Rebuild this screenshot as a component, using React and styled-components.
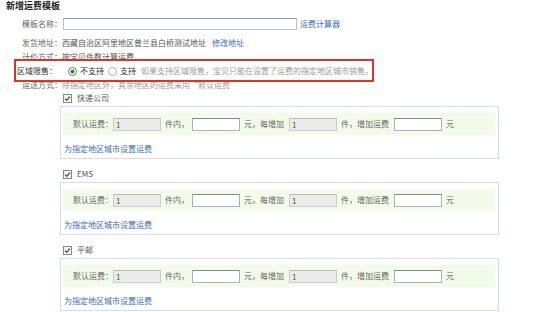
import React from "react";
import styled, { createGlobalStyle } from "styled-components";

const Global = createGlobalStyle`
  html, body { margin: 0; padding: 0; background: #fff; }
  body { font-family: "Noto Sans CJK SC", "Noto Sans", sans-serif; font-size: 8px; color: #444; }
  * { box-sizing: border-box; }
`;

const Page = styled.div`
  position: relative;
  width: 535px;
  height: 312px;
  overflow: hidden;
  padding-left: 6px;
`;

const Title = styled.div`
  height: 12px;
  line-height: 12px;
  font-size: 9px;
  font-weight: 700;
  color: #222;
`;

const Row = styled.div`
  display: flex;
  align-items: center;
  height: ${(p) => p.$h || 14}px;
  padding-left: ${(p) => (p.$shift ? 11 : 16)}px;
  white-space: nowrap;
  line-height: 12px;
`;

const Label = styled.span`
  color: ${(p) => (p.$strong ? "#333" : "#666")};
  width: ${(p) => (p.$w ? `${p.$w}px` : "auto")};
  flex: none;
`;

const Value = styled.span`
  color: ${(p) => (p.$muted ? "#9a9a9a" : "#555")};
  margin-left: ${(p) => p.$ml || 0}px;
`;

const Link = styled.a`
  color: #3b6dbb;
  text-decoration: none;
  margin-left: ${(p) => p.$ml || 0}px;
  cursor: pointer;
`;

const NameInput = styled.input`
  width: 234px;
  height: 12px;
  border: 1px solid #b9c3cc;
  border-top-color: #8f9aa6;
  padding: 0;
  margin-left: 2px;
  background: #fff;
`;

const RadioWrap = styled.span`
  display: inline-flex;
  align-items: center;
  margin-left: ${(p) => p.$ml || 0}px;
  color: #333;
  gap: 3px;
`;

const Radio = ({ checked }) => (
  <svg width="9" height="9" viewBox="0 0 9 9">
    <circle cx="4.5" cy="4.5" r="4" fill="#fff" stroke={checked ? "#4a7a4a" : "#9aa5b0"} strokeWidth="0.9" />
    {checked && <circle cx="4.5" cy="4.5" r="2" fill="#2f7d32" />}
  </svg>
);

const Section = styled.div`
  margin-left: 54px;
  width: 439px;
  margin-top: ${(p) => p.$mt || 0}px;
`;

const CheckRow = styled.div`
  display: flex;
  align-items: center;
  height: 12px;
  padding-left: 3px;
  gap: 5px;
  color: #555;
  line-height: 12px;
`;

const Check = () => (
  <svg width="9" height="9" viewBox="0 0 9 9">
    <rect x="0.5" y="0.5" width="8" height="8" fill="#f4f7f4" stroke="#7d8f7d" />
    <path d="M2 4.6 L3.8 6.3 L7 2.6" fill="none" stroke="#2c6a2c" strokeWidth="1.3" />
  </svg>
);

const Box = styled.div`
  margin-top: 2px;
  height: 53px;
  border: 1px solid #cfdfea;
  padding: 6px 3px 0 1px;
`;

const Band = styled.div`
  display: flex;
  align-items: center;
  height: 22px;
  background: #f3fbea;
  padding-left: 11px;
  white-space: nowrap;
  line-height: 12px;
`;

const FeeInput = styled.input`
  width: 48px;
  height: 13px;
  padding: 0 0 0 2px;
  font-family: "Noto Sans CJK SC", sans-serif;
  font-size: 8px;
  color: #555;
  border: 1px solid ${(p) => (p.$disabled ? "#cccccc" : "#a8b3be")};
  border-top-color: ${(p) => (p.$disabled ? "#bdbdbd" : "#7f8b97")};
  background: ${(p) => (p.$disabled ? "#ebebeb" : "#fff")};
  flex: none;
`;

const Unit = styled.span`
  color: #666;
  width: ${(p) => p.$w}px;
  padding-left: 4px;
  flex: none;
`;

const BoxLink = styled.div`
  padding-left: 2px;
  height: 26px;
  display: flex;
  align-items: center;
`;

const RedMark = styled.div`
  position: absolute;
  left: 14px;
  top: 59px;
  width: 360px;
  height: 23px;
  border: 2px solid #d8352f;
  pointer-events: none;
`;

const services = ["快递公司", "EMS", "平邮"];

const FeeBlock = ({ name, mt }) => (
  <Section $mt={mt}>
    <CheckRow>
      <Check />
      <span>{name}</span>
    </CheckRow>
    <Box>
      <Band>
        <Label $w={40}>默认运费：</Label>
        <FeeInput $disabled defaultValue="1" readOnly />
        <Unit $w={31}>件内，</Unit>
        <FeeInput />
        <Unit $w={49}>元，每增加</Unit>
        <FeeInput $disabled defaultValue="1" readOnly />
        <Unit $w={57}>件，增加运费</Unit>
        <FeeInput />
        <Unit $w={12}>元</Unit>
      </Band>
      <BoxLink>
        <Link>为指定地区城市设置运费</Link>
      </BoxLink>
    </Box>
  </Section>
);

export default function App() {
  return (
    <>
      <Global />
      <Page>
        <Title>新增运费模板</Title>
        <Row $h={23}>
          <Label $w={39}>模板名称：</Label>
          <NameInput />
          <Link $ml={3}>运费计算器</Link>
        </Row>
        <Row $h={15}>
          <Label>发货地址：</Label>
          <Value>西藏自治区阿里地区普兰县白桥测试地址</Value>
          <Link $ml={6}>修改地址</Link>
        </Row>
        <Row>
          <Label>计价方式：</Label>
          <Value>按宝贝件数计算运费</Value>
        </Row>
        <Row $shift>
          <Label $strong $w={51}>区域限售：</Label>
          <RadioWrap>
            <Radio checked />
            <span>不支持</span>
          </RadioWrap>
          <RadioWrap $ml={4}>
            <Radio />
            <span>支持</span>
          </RadioWrap>
          <Value $muted $ml={5}>如果支持区域限售，宝贝只能在设置了运费的指定地区城市销售。</Value>
        </Row>
        <Row>
          <Label>运送方式：</Label>
          <Value $muted>除指定地区外，其余地区的运费采用“默认运费”</Value>
        </Row>
        {services.map((s, i) => (
          <FeeBlock key={s} name={s} mt={i === 0 ? 0 : 9} />
        ))}
        <RedMark />
      </Page>
    </>
  );
}
